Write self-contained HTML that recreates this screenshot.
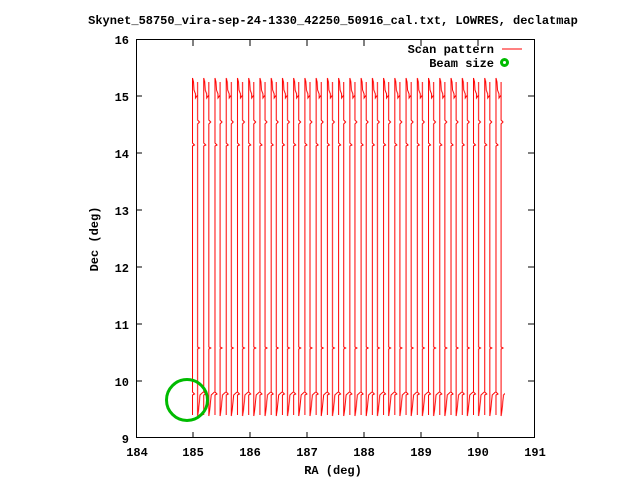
<!DOCTYPE html>
<html><head><style>
body{margin:0;background:#fff}
svg{display:block}
text{font-family:"Liberation Mono",monospace;font-weight:bold;font-size:12px;fill:#000}
</style></head><body>
<svg width="640" height="480" xmlns="http://www.w3.org/2000/svg">
<defs>
<pattern id="sc" x="192" y="70" width="11.24" height="350" patternUnits="userSpaceOnUse">
<path fill="none" stroke="#f00" stroke-width="1" d="M0.5 345V325L2.5 324L0.5 322V76L2.5 75L0.5 73V8L1.5 12L2 20L3.5 24V28L5.6 25V12L5.6 50L7.5 52L5.6 54V277L7.5 278L5.6 279V346L6.5 340L8 325L11.24 322"/>
</pattern>
</defs>
<text x="333" y="24" text-anchor="middle">Skynet_58750_vira-sep-24-1330_42250_50916_cal.txt, LOWRES, declatmap</text>
<rect x="192" y="70" width="313" height="350" fill="url(#sc)"/>
<g stroke="#000" stroke-width="1" fill="none">
<rect x="136.5" y="39.5" width="398" height="398"/>
<path d="M136 96h6M136 153h6M136 210h6M136 267h6M136 324h6M136 381h6M534 96h-6M534 153h-6M534 210h-6M534 267h-6M534 324h-6M534 381h-6
M193 438v-6M250 438v-6M307 438v-6M364 438v-6M421 438v-6M478 438v-6M193 40v6M250 40v6M307 40v6M364 40v6M421 40v6M478 40v6"/>
</g>
<path d="M502 49h20" stroke="#f00" stroke-width="1"/>
<g text-anchor="end">
<text x="129" y="44">16</text><text x="129" y="101">15</text><text x="129" y="158">14</text><text x="129" y="215">13</text><text x="129" y="272">12</text><text x="129" y="329">11</text><text x="129" y="386">10</text><text x="129" y="443">9</text>
<text x="494" y="53">Scan pattern</text><text x="494" y="67">Beam size</text>
</g>
<g text-anchor="middle">
<text x="137" y="456">184</text><text x="193" y="456">185</text><text x="250" y="456">186</text><text x="307" y="456">187</text><text x="364" y="456">188</text><text x="421" y="456">189</text><text x="478" y="456">190</text><text x="535" y="456">191</text>
<text x="333" y="474">RA (deg)</text>
<text transform="translate(98,239) rotate(-90)">Dec (deg)</text>
</g>
<circle cx="187" cy="400" r="20.5" fill="none" stroke="#0b0" stroke-width="3"/>
<circle cx="504.5" cy="62.5" r="3" fill="none" stroke="#0b0" stroke-width="3"/>
</svg>
</body></html>
